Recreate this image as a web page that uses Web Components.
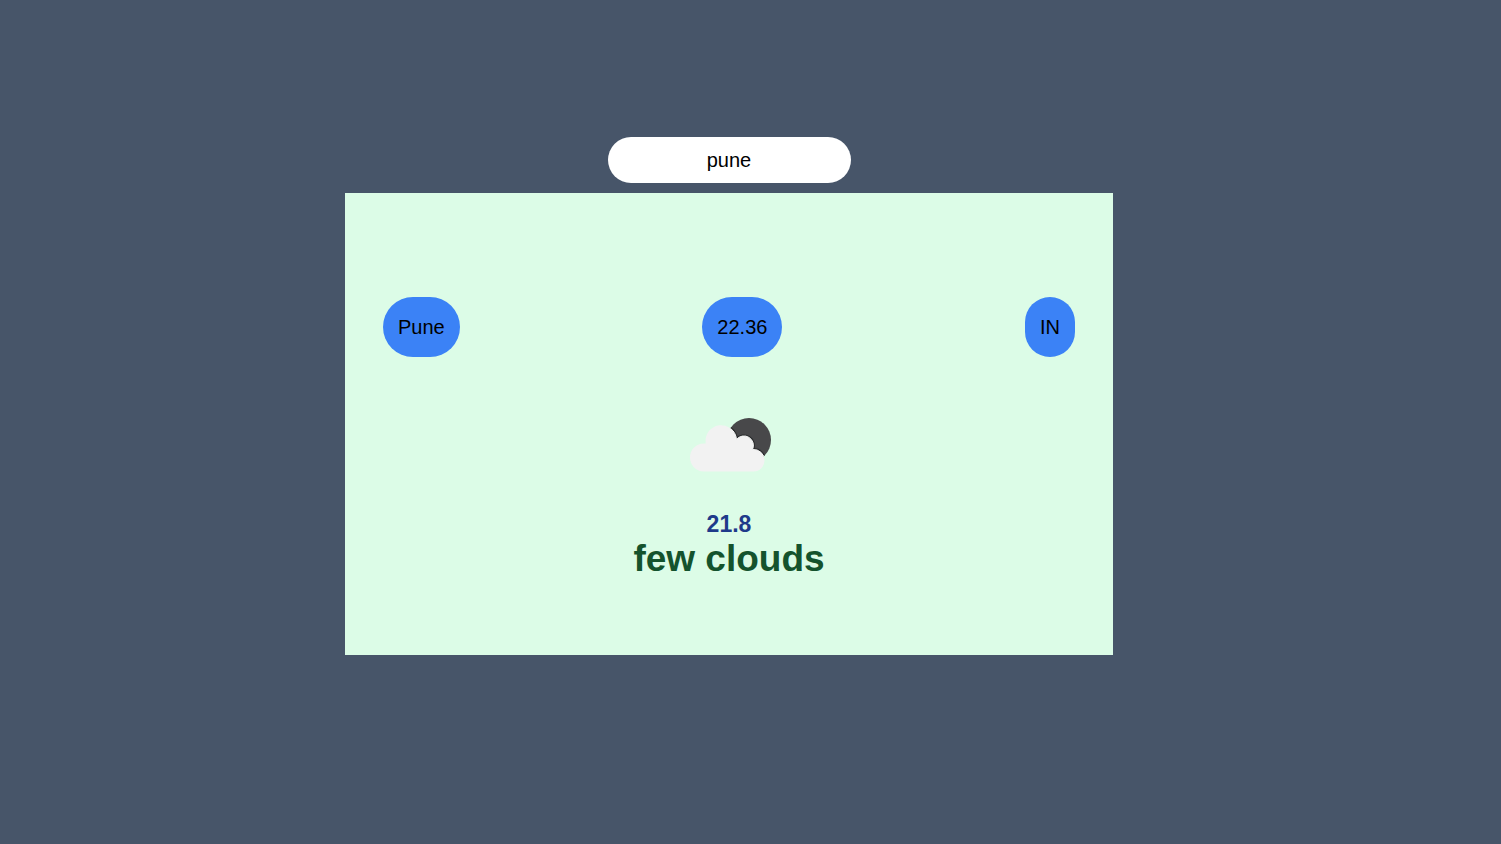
<!DOCTYPE html>
<html lang="en">
<head>
<meta charset="utf-8">
<title>Weather</title>
<style>
  body { margin: 0; background: #475569; font-family: "Liberation Sans", Arial, sans-serif; font-size: 20px; line-height: 30px; color: #000; }
</style>
</head>
<body>
<weather-app></weather-app>
<script>
class WeatherSearch extends HTMLElement {
  constructor() {
    super();
    this.attachShadow({ mode: 'open' }).innerHTML = `
      <style>
        :host { display: block; }
        input { display: block; box-sizing: border-box; width: 243px; height: 46px; padding: 8px; border: 0; border-radius: 23px; outline: 0; background: #fff; color: #000; font: inherit; text-align: center; }
      </style>
      <input type="text" aria-label="City" value="${this.getAttribute('value') || ''}">`;
  }
}
customElements.define('weather-search', WeatherSearch);

class WeatherPill extends HTMLElement {
  constructor() {
    super();
    this.attachShadow({ mode: 'open' }).innerHTML = `
      <style>
        :host { display: block; padding: 15px; border-radius: 30px; background: #3b82f6; }
      </style>
      <slot></slot>`;
  }
}
customElements.define('weather-pill', WeatherPill);

class WeatherIcon extends HTMLElement {
  constructor() {
    super();
    this.attachShadow({ mode: 'open' }).innerHTML = `
      <style>
        :host { display: block; }
        svg { display: block; width: 100px; height: 100px; }
      </style>
      <svg viewBox="0 0 100 100" role="img" aria-label="few clouds">
        <defs>
          <path id="cloud" d="M25 76.500 A14 14 0 0 1 25 48.500 L26.800 48.500 A15.500 15.500 0 1 1 57.500 44.500 A9.500 9.500 0 0 1 73.500 54.500 A11 11 0 0 1 85.500 65.500 A11 11 0 0 1 74.500 76.500 Z"/>
          <clipPath id="sun"><circle cx="70" cy="45" r="22"/></clipPath>
          <filter id="soft"><feGaussianBlur stdDeviation="0.700"/></filter>
        </defs>
        <circle cx="70" cy="45" r="22" fill="#48484a"/>
        <g clip-path="url(#sun)">
          <use href="#cloud" fill="none" stroke="#2c2d2f" stroke-width="3" filter="url(#soft)"/>
          <use href="#cloud" fill="none" stroke="#fff" stroke-width="1"/>
        </g>
        <use href="#cloud" fill="#f2f2f2"/>
      </svg>`;
  }
}
customElements.define('weather-icon', WeatherIcon);

class WeatherCard extends HTMLElement {
  constructor() {
    super();
    this.attachShadow({ mode: 'open' }).innerHTML = `
      <style>
        :host { display: flex; flex-direction: column; align-items: center; box-sizing: border-box; width: 100%; max-width: 768px; padding: 104px 38px 76px; background: #dcfce7; }
        .facts { display: flex; justify-content: space-between; align-self: stretch; margin-bottom: 38px; }
        ::slotted(h2) { margin: 14px 0 0; font-size: 23px; line-height: 30px; color: #1e3a8a; }
        ::slotted(h1) { margin: 0; font-size: 37px; line-height: 40px; color: #14532d; }
      </style>
      <div class="facts"><slot name="fact"></slot></div>
      <slot></slot>`;
  }
}
customElements.define('weather-card', WeatherCard);

class WeatherApp extends HTMLElement {
  constructor() {
    super();
    this.attachShadow({ mode: 'open' }).innerHTML = `
      <style>
        :host { display: block; }
        main { display: flex; flex-direction: column; align-items: center; gap: 10px; padding: 137px 43px 0 0; }
      </style>
      <main>
        <weather-search value="pune"></weather-search>
        <weather-card>
          <weather-pill slot="fact">Pune</weather-pill>
          <weather-pill slot="fact">22.36</weather-pill>
          <weather-pill slot="fact">IN</weather-pill>
          <weather-icon></weather-icon>
          <h2>21.8</h2>
          <h1>few clouds</h1>
        </weather-card>
      </main>`;
  }
}
customElements.define('weather-app', WeatherApp);
</script>
</body>
</html>
